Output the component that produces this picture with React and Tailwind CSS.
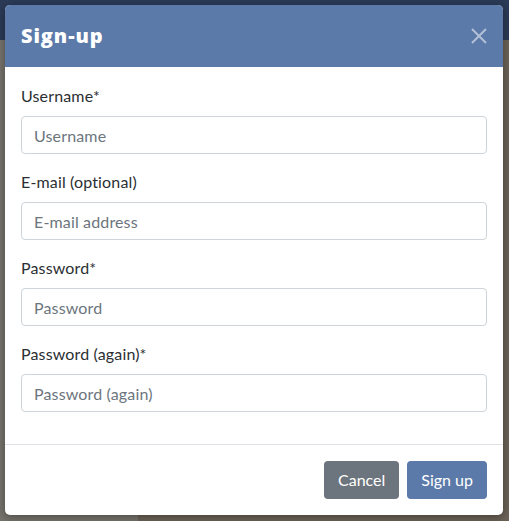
export default function App() {
  const fields = [
    { label: "Username*", ph: "Username", type: "text" },
    { label: "E-mail (optional)", ph: "E-mail address", type: "email" },
    { label: "Password*", ph: "Password", type: "password" },
    { label: "Password (again)*", ph: "Password (again)", type: "password" },
  ];
  return (
    <div className="relative w-[509px] h-[521px] overflow-hidden bg-[#6d685f] font-['Lato',sans-serif]">
      <div className="h-[40px] bg-[#2b3a56]" />
      <div className="flex h-[481px]">
        <div className="w-[138px] bg-[#75726b]" />
        <div className="flex-1 bg-[#6b6155]" />
      </div>
      <div className="absolute left-[5px] top-[5px] w-[498px] h-[510px] rounded-[5px] bg-white overflow-hidden shadow-[0_2px_8px_rgba(0,0,0,0.35)] flex flex-col">
        <div className="h-[62px] shrink-0 bg-[#5b7aa9] flex items-center justify-between px-4">
          <div className="text-white text-[20px] font-extrabold tracking-[0.9px] font-['Open_Sans',sans-serif]">Sign-up</div>
          <svg width="16" height="16" viewBox="0 0 16 16">
            <path d="M1 1L15 15M15 1L1 15" stroke="#b3c0d6" strokeWidth="2" />
          </svg>
        </div>
        <div className="px-4 pt-4 pb-[32px] flex flex-col gap-[15px]">
          {fields.map((f) => (
            <div key={f.label} className="flex flex-col">
              <label className="h-[25px] mb-[8px] text-[16px] leading-[25px] text-[#2b2f33] tracking-[0.15px]">{f.label}</label>
              <input
                type={f.type}
                placeholder={f.ph}
                className="h-[38px] w-full rounded-[4px] border border-[#ced4da] px-[12px] text-[16px] tracking-[0.15px] text-[#212529] placeholder:text-[#6c757d] outline-none"
              />
            </div>
          ))}
        </div>
        <div className="border-t border-[#dee2e6] px-4 pt-4 flex justify-end gap-2">
          <button className="h-[38px] px-[14px] rounded-[4px] bg-[#6c757d] text-white text-[16px]">Cancel</button>
          <button className="h-[38px] px-[14px] rounded-[4px] bg-[#5b7aa9] text-white text-[16px]">Sign up</button>
        </div>
      </div>
    </div>
  );
}
